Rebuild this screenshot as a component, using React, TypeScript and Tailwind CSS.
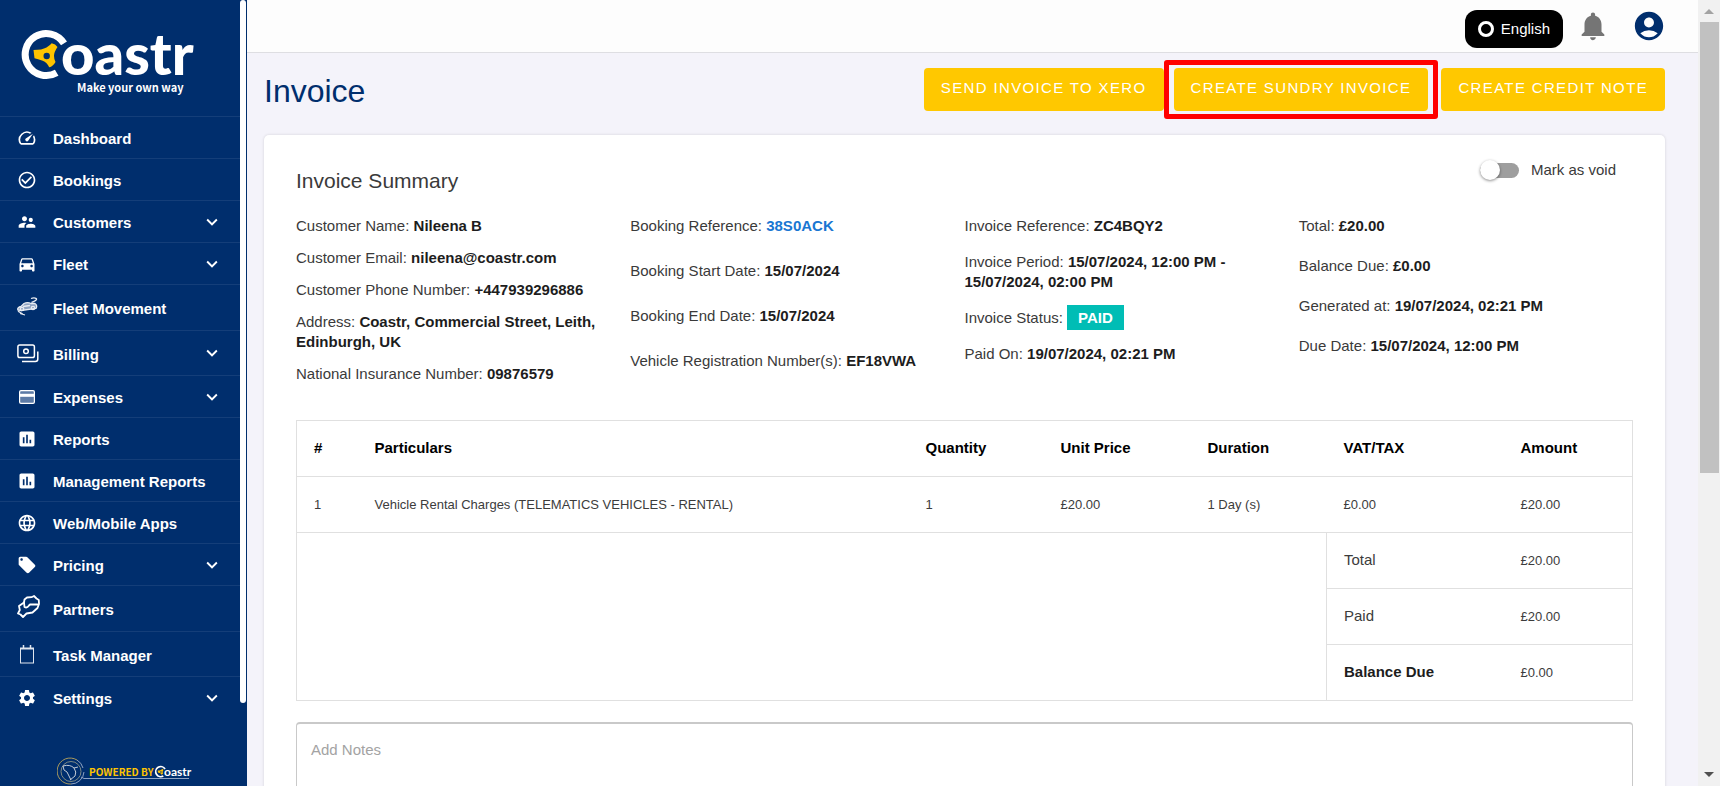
import type { ReactNode } from "react";
import {
  MdAccountCircle,
  MdAssessment,
  MdCheckCircleOutline,
  MdDirectionsCar,
  MdExpandMore,
  MdLanguage,
  MdLocalOffer,
  MdNotifications,
  MdSettings,
  MdSpeed,
  MdSupervisorAccount,
} from "react-icons/md";

function CoastrMark() {
  return (
    <>
      <path d="M44 14.4 A21 21 0 1 0 36.7 43.7" fill="none" stroke="#fff" strokeWidth="7" />
      <path
        d="M13.5 21 Q22 21 26.5 18.5 Q30 16.5 31.7 14.3 Q35.5 15 37.5 18 Q34 23 34 27 Q34 30 35.5 33 Q33 37.5 29.2 38.3 Q27 33 22 31.5 Q18 30 14.5 29.3 Z"
        fill="#ffc400"
      />
      <circle cx="26.7" cy="27" r="3.2" fill="#002e6d" />
    </>
  );
}

function Logo() {
  return (
    <a href="#" aria-label="Coastr home" className="block h-[116px] pl-5">
      <svg width="190" height="104" viewBox="0 -29 190 104">
        <CoastrMark />
        <text x="41" y="46" fill="#fff" fontFamily="Lato, sans-serif" fontWeight="900" fontSize="58">
          oastr
        </text>
        <text
          x="57"
          y="63"
          fill="#fff"
          fontFamily="'Noto Sans CJK SC', sans-serif"
          fontWeight="700"
          fontSize="11"
        >
          Make your own way
        </text>
      </svg>
    </a>
  );
}

function FleetMovementIcon() {
  return (
    <svg width="21" height="22" viewBox="0 0 21 22" fill="none" stroke="#e8ecf2" strokeWidth="1.3">
      <path d="M14 1.5 C17 .5 20 1 19.5 2.5 C19 4 16 4.5 14.5 5.5" />
      <path
        d="M1 13 C0 11 2 10 4 9.5 L7 6.5 C9 5.5 12 5.5 14 6.5 L18 6.5 C20 7.5 20 10 19 11.5 L4 13.5 Z"
        fill="#8fa3c2"
      />
      <path d="M6 9.5 L13 8.5" />
      <circle cx="5" cy="12" r="1.7" />
      <circle cx="16" cy="11" r="1.7" />
      <path d="M1 13.5 C2 16 5 15.5 6 17.5 M3 16.5 L8 18" />
    </svg>
  );
}

function BillingIcon() {
  return (
    <svg width="22" height="19" viewBox="0 0 22 19" fill="none" stroke="#fff" strokeWidth="1.5">
      <rect x=".9" y="1" width="16.5" height="12.5" rx="1.8" />
      <circle cx="9" cy="7.2" r="2.3" />
      <path d="M20.8 7.5 V15 Q20.8 17.5 18.3 17.5 H5" />
    </svg>
  );
}

function ExpensesIcon() {
  return (
    <svg width="16" height="14" viewBox="0 0 16 14">
      <rect x=".6" y=".6" width="14.8" height="12.8" rx="1.4" fill="#5d7ba6" stroke="#fff" strokeWidth="1.2" />
      <rect x="1" y="3.8" width="14" height="3" fill="#fff" />
    </svg>
  );
}

function PartnersIcon() {
  return (
    <svg
      width="23"
      height="28"
      viewBox="0 0 23 28"
      fill="none"
      stroke="#fff"
      strokeWidth="1.8"
      strokeLinejoin="round"
      strokeLinecap="round"
    >
      <path d="M7.5 4.5 L10 2.5 L14.5 2.2 L17 1 L19.5 3.5 L21.8 5 L22 9 L20.5 13 L15.5 17.5 L9.5 18.5 L6 22 L3.5 19.5 L1 18.5 L2.8 15 L2 11 L7 7.5 Z" />
      <path d="M7 7.5 L7.5 12 Q10 13.5 12 10.5 L13 9.5 L20.5 9.5" />
    </svg>
  );
}

function TaskIcon() {
  return (
    <svg width="16" height="19" viewBox="0 0 16 19" fill="none" stroke="#dfe5ee">
      <rect x="1.5" y="3.5" width="13" height="14.5" />
      <path d="M1 3.5 H15" strokeWidth="2" />
      <path d="M4.5 0 V4 M11.5 0 V4" strokeWidth="1.5" />
    </svg>
  );
}

type NavItem = { label: string; icon: ReactNode; height?: string; expandable?: boolean };

const navItems: NavItem[] = [
  { label: "Dashboard", icon: <MdSpeed size={20} /> },
  { label: "Bookings", icon: <MdCheckCircleOutline size={20} /> },
  { label: "Customers", icon: <MdSupervisorAccount size={20} />, expandable: true },
  { label: "Fleet", icon: <MdDirectionsCar size={20} />, expandable: true },
  { label: "Fleet Movement", icon: <FleetMovementIcon />, height: "h-[45px]" },
  { label: "Billing", icon: <BillingIcon />, height: "h-11", expandable: true },
  { label: "Expenses", icon: <ExpensesIcon />, expandable: true },
  { label: "Reports", icon: <MdAssessment size={20} /> },
  { label: "Management Reports", icon: <MdAssessment size={20} /> },
  { label: "Web/Mobile Apps", icon: <MdLanguage size={20} /> },
  { label: "Pricing", icon: <MdLocalOffer size={20} />, expandable: true },
  { label: "Partners", icon: <PartnersIcon />, height: "h-[45px]" },
  { label: "Task Manager", icon: <TaskIcon />, height: "h-11" },
  { label: "Settings", icon: <MdSettings size={20} />, expandable: true },
];

function PoweredBy() {
  return (
    <div className="mt-auto pl-[57px]">
      <svg width="136" height="29" viewBox="0 0 136 29" className="block">
        <g fill="none" strokeWidth="1">
          <path d="M20 3 A13 13 0 1 0 14 27" stroke="#a99a5e" />
          <path d="M20 3 A13 13 0 0 1 26 11 M27 15 A13 13 0 0 1 14 27" stroke="#8fa3c2" />
          <circle cx="14" cy="14.5" r="10" stroke="#7f8b86" />
          <path d="M6 9 Q13 7 17 11 L21 10 M17 11 Q20 15 18 19 L13 23 M6 9 Q6 14 10 15 L14 23" stroke="#c3cbd6" />
          <path d="M24 20 L27 21.5 H132" stroke="#8fa3c2" />
        </g>
        <text x="32" y="19" fill="#ffc400" fontFamily="'Noto Sans CJK SC', sans-serif" fontWeight="700" fontSize="10">
          POWERED BY
        </text>
        <g transform="translate(97.5 8.5) scale(.24)">
          <CoastrMark />
        </g>
        <text x="107" y="19" fill="#fff" fontFamily="Lato, sans-serif" fontWeight="700" fontSize="12">
          oastr
        </text>
      </svg>
    </div>
  );
}

function Sidebar() {
  return (
    <aside className="flex w-[247px] shrink-0 bg-[#002e6d] text-white">
      <div className="flex min-w-0 flex-1 flex-col">
        <Logo />
        <nav>
          <ul>
            {navItems.map((item) => (
              <li key={item.label} className="border-t border-[#143e79]">
                <a href="#" className={`flex items-center px-[17px] ${item.height ?? "h-[41px]"}`}>
                  <span className="flex w-9 shrink-0">
                    <span className="flex min-w-5 justify-center">{item.icon}</span>
                  </span>
                  <span className="flex-1 pt-[3px] text-[15px] leading-5 font-bold">{item.label}</span>
                  {item.expandable && <MdExpandMore size={22} />}
                </a>
              </li>
            ))}
          </ul>
        </nav>
        <PoweredBy />
      </div>
      <div className="w-[7px]" aria-hidden="true">
        <div className="h-[89.5%] w-1.5 rounded-full bg-white" />
      </div>
    </aside>
  );
}

function TopBar() {
  return (
    <header className="flex h-[53px] shrink-0 items-center justify-end border-b border-[#dedee2] bg-[#fdfdfd] pr-8">
      <button className="mt-1.5 mr-[13px] flex h-[38px] items-center gap-[7px] rounded-xl bg-black px-[13px] text-[15px] text-white">
        <span className="size-4 rounded-full border-3 border-white" />
        English
      </button>
      <button aria-label="Notifications" className="mr-[22px] text-[#757575]">
        <MdNotifications size={34} />
      </button>
      <button aria-label="Account" className="text-[#002e6d]">
        <MdAccountCircle size={34} />
      </button>
    </header>
  );
}

function ActionButton({ children }: { children: ReactNode }) {
  return (
    <button className="h-[43px] rounded-[4px] bg-[#ffc800] px-[17px] pb-0.5 text-[15px] tracking-[0.09em] whitespace-nowrap text-white uppercase">
      {children}
    </button>
  );
}

function Field({ label, children }: { label: string; children: ReactNode }) {
  return (
    <p>
      {label}: <b className="text-[#1d1d1d]">{children}</b>
    </p>
  );
}

function Summary() {
  return (
    <div className="mt-[21px] grid grid-cols-4 text-[15px] leading-5">
      <div className="flex flex-col gap-3 pr-6">
        <Field label="Customer Name">Nileena B</Field>
        <Field label="Customer Email">nileena@coastr.com</Field>
        <Field label="Customer Phone Number">+447939296886</Field>
        <Field label="Address">Coastr, Commercial Street, Leith, Edinburgh, UK</Field>
        <Field label="National Insurance Number">09876579</Field>
      </div>
      <div className="flex flex-col gap-[25px]">
        <Field label="Booking Reference">
          <a href="#" className="text-[#1976d2]">
            38S0ACK
          </a>
        </Field>
        <Field label="Booking Start Date">15/07/2024</Field>
        <Field label="Booking End Date">15/07/2024</Field>
        <Field label="Vehicle Registration Number(s)">EF18VWA</Field>
      </div>
      <div className="flex flex-col gap-4 pr-12">
        <Field label="Invoice Reference">ZC4BQY2</Field>
        <Field label="Invoice Period">15/07/2024, 12:00 PM - 15/07/2024, 02:00 PM</Field>
        <Field label="Invoice Status">
          <span className="bg-[#00bdb5] px-[11px] py-1 text-white">PAID</span>
        </Field>
        <Field label="Paid On">19/07/2024, 02:21 PM</Field>
      </div>
      <div className="flex flex-col gap-5">
        <Field label="Total">£20.00</Field>
        <Field label="Balance Due">£0.00</Field>
        <Field label="Generated at">19/07/2024, 02:21 PM</Field>
        <Field label="Due Date">15/07/2024, 12:00 PM</Field>
      </div>
    </div>
  );
}

const headers = ["#", "Particulars", "Quantity", "Unit Price", "Duration", "VAT/TAX", "Amount"];
const lineItem = ["1", "Vehicle Rental Charges (TELEMATICS VEHICLES - RENTAL)", "1", "£20.00", "1 Day (s)", "£0.00", "£20.00"];
const totals = [
  { label: "Total", value: "£20.00" },
  { label: "Paid", value: "£20.00" },
  { label: "Balance Due", value: "£0.00", strong: true },
];

function InvoiceTable() {
  return (
    <table className="mt-9 w-full table-fixed border-collapse border border-[#e0e0e0] text-left text-[13px] text-[#3c3c3c]">
      <colgroup>
        <col className="w-[61px]" />
        <col />
        <col className="w-[135px]" />
        <col className="w-[147px]" />
        <col className="w-[136px]" />
        <col className="w-[177px]" />
        <col className="w-[129px]" />
      </colgroup>
      <thead>
        <tr className="h-14 border-b border-[#e0e0e0] text-[15px] text-black">
          {headers.map((header) => (
            <th key={header} className="pl-[17px] font-bold">
              {header}
            </th>
          ))}
        </tr>
      </thead>
      <tbody>
        <tr className="h-14 border-b border-[#e0e0e0]">
          {lineItem.map((cell, i) => (
            <td key={headers[i]} className="pl-[17px]">
              {cell}
            </td>
          ))}
        </tr>
        {totals.map((row, i) => (
          <tr key={row.label} className="h-14">
            {i === 0 && <td rowSpan={3} colSpan={5} className="border-r border-[#e0e0e0]" />}
            <th
              scope="row"
              className={`border-b border-[#e0e0e0] pl-[17px] text-[15px] ${row.strong ? "font-bold text-[#1d1d1d]" : "font-normal"}`}
            >
              {row.label}
            </th>
            <td className="border-b border-[#e0e0e0] pl-[17px]">{row.value}</td>
          </tr>
        ))}
      </tbody>
    </table>
  );
}

function VoidSwitch() {
  return (
    <label className="flex items-center gap-3 pt-px text-[15px] leading-5">
      <span className="relative flex h-5 w-[39px] items-center">
        <input
          type="checkbox"
          role="switch"
          className="h-[15px] w-full appearance-none rounded-full bg-[#9e9e9e]"
        />
        <span className="pointer-events-none absolute top-0 left-0 size-5 rounded-full bg-white shadow-[0_1px_3px_rgba(0,0,0,0.45)]" />
      </span>
      Mark as void
    </label>
  );
}

function PageScrollbar() {
  return (
    <div className="flex w-[22px] shrink-0 flex-col items-center bg-[#f1f1f1]" aria-hidden="true">
      <svg width="10" height="22" viewBox="0 0 10 22">
        <path d="M0 14 L5 9 L10 14 Z" fill="#a3a3a3" />
      </svg>
      <div className="w-[19px] flex-[45] bg-[#c1c1c1]" />
      <div className="flex-[29]" />
      <svg width="10" height="22" viewBox="0 0 10 22">
        <path d="M0 8 L5 13 L10 8 Z" fill="#505050" />
      </svg>
    </div>
  );
}

export default function App() {
  return (
    <div className="flex h-screen overflow-hidden bg-[#f4f3fa] font-['Liberation_Sans',Arial,sans-serif] text-[#3a3a3a]">
      <Sidebar />
      <div className="flex min-w-0 flex-1 flex-col">
        <TopBar />
        <main className="min-h-0 flex-1 overflow-y-auto pr-[33px] pl-[17px] [scrollbar-width:none]">
          <div className="flex items-start justify-between pt-[7px]">
            <h1 className="pt-[11px] text-[32px] leading-10 text-[#002e6d]">Invoice</h1>
            <div className="flex items-center">
              <ActionButton>Send invoice to Xero</ActionButton>
              <div className="mr-[3px] flex rounded-[3px] border-5 border-[#ff0000] px-[5px] py-[3px]">
                <ActionButton>Create sundry invoice</ActionButton>
              </div>
              <ActionButton>Create credit note</ActionButton>
            </div>
          </div>
          <section className="mt-4 rounded-[5px] bg-white px-8 pt-6 pb-8 shadow-[0_0_3px_rgba(0,0,0,0.14)]">
            <div className="flex items-start justify-between pr-[17px]">
              <h2 className="pt-2 text-[21px] leading-7">Invoice Summary</h2>
              <VoidSwitch />
            </div>
            <Summary />
            <InvoiceTable />
            <textarea
              aria-label="Notes"
              placeholder="Add Notes"
              rows={5}
              className="mt-[21px] block w-full resize-none rounded-[4px] border border-t-2 border-[#c9c9c9] px-3.5 py-4 text-[15px] leading-5 placeholder:text-[#a3a3a3]"
            />
          </section>
        </main>
      </div>
      <PageScrollbar />
    </div>
  );
}
